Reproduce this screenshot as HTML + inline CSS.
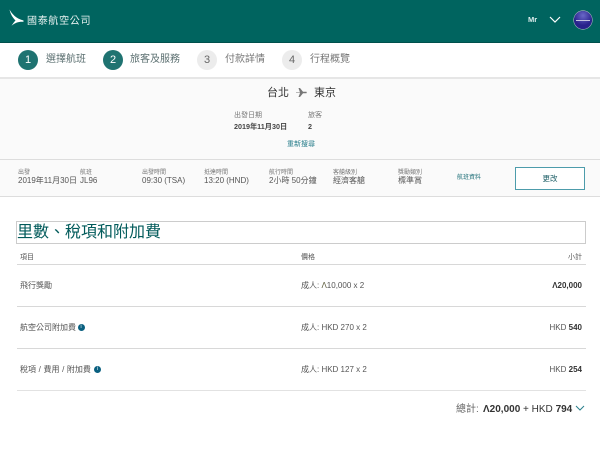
<!DOCTYPE html>
<html lang="zh-Hant"><head><meta charset="utf-8"><style>
html,body{margin:0;padding:0}
body{width:600px;height:452px;position:relative;overflow:hidden;background:#fff;font-family:"Liberation Sans","Noto Sans CJK TC",sans-serif;color:#4c4c4c}
.a{position:absolute;white-space:nowrap;line-height:1}
.b{position:absolute}
.c{position:absolute;width:20px;height:20px;border-radius:50%;line-height:20px;text-align:center;font-size:11px}
.on{background:#1f7371;color:#fff}
.off{background:#ececec;color:#666}
.s{font-size:10px;color:#5b6f70}
.l{font-size:6px;color:#777}
.v{font-size:8px;color:#555}
.t{font-size:8px;color:#555}
.hr{position:absolute;left:17px;width:569px;height:1px;background:#d8d8d8}
.i{position:absolute;width:7px;height:7px;border-radius:50%;background:#0a6080;color:#fff;font-size:5px;line-height:7px;text-align:center}
</style></head><body>
<div class="b" style="left:0;top:0;width:600px;height:42px;background:#00645f;border-bottom:1px solid #00504c"></div>
<svg class="b" style="left:0;top:0" width="30" height="30" viewBox="0 0 30 30"><path d="M9.5 9.5C12 14 16 18.500 23.500 20.500L23.500 21.800C19 21.500 15.500 22.500 11.500 25.800C13 23.500 14.500 21.500 15.500 20.500C12.500 17.500 10.500 14 9.500 9.500Z" fill="#fff"/></svg>
<div class="a" style="left:27px;top:17px;font-size:10px;letter-spacing:.7px;color:#e8f2f1">國泰航空公司</div>
<div class="a" style="left:528px;top:16px;font-size:7.5px;font-weight:bold;color:#dfeeee">Mr</div>
<svg class="b" style="left:549px;top:15px" width="12" height="9" viewBox="0 0 12 9"><path d="M1 2L6 7L11 2" fill="none" stroke="#fff" stroke-width="1.2"/></svg>
<div class="b" style="left:574px;top:11px;width:18px;height:18px;border-radius:50%;background:radial-gradient(circle at 50% 25%,#6a68c8,#28228c 60%);box-shadow:0 0 0 .6px #b5b5c8"></div>
<div class="b" style="left:576px;top:19.500px;width:14px;height:1px;background:#c4c4e0"></div>

<div class="c on" style="left:18px;top:50px">1</div><div class="a s" style="left:46px;top:55px">選擇航班</div>
<div class="c on" style="left:103px;top:50px">2</div><div class="a s" style="left:130px;top:55px">旅客及服務</div>
<div class="c off" style="left:197px;top:50px">3</div><div class="a s" style="left:225px;top:55px;color:#777">付款詳情</div>
<div class="c off" style="left:282px;top:50px">4</div><div class="a s" style="left:310px;top:55px;color:#777">行程概覽</div>

<div class="b" style="left:0;top:77px;width:600px;height:120px;background:#fafafa;border-top:2px solid #e6e6e6;box-sizing:border-box"></div>
<div class="a" style="left:267px;top:88px;font-size:11px;color:#333">台北</div>
<svg class="b" style="left:296px;top:87px" width="11" height="11" viewBox="0 0 11 11"><path d="M0 5.500H4L2.500 1H4L7 4.700H10.500Q11 5.500 10.500 6.300H7L4 10H2.500L4 6H0Z" fill="#777"/></svg>
<div class="a" style="left:314px;top:88px;font-size:11px;color:#333">東京</div>
<div class="a" style="left:234px;top:112px;font-size:7px;color:#777">出發日期</div>
<div class="a" style="left:308px;top:112px;font-size:7px;color:#777">旅客</div>
<div class="a" style="left:234px;top:123px;font-size:7.200px;font-weight:bold;color:#444">2019年11月30日</div>
<div class="a" style="left:308px;top:123px;font-size:7.200px;font-weight:bold;color:#444">2</div>
<div class="a" style="left:287px;top:141px;font-size:7px;color:#2a7f8c">重新搜尋</div>

<div class="b" style="left:0;top:159px;width:600px;height:1px;background:#ddd"></div>
<div class="b" style="left:0;top:196px;width:600px;height:1px;background:#ddd"></div>
<div class="a l" style="left:18px;top:170px">出發</div><div class="a v" style="left:18px;top:177px">2019年11月30日</div>
<div class="a l" style="left:80px;top:170px">航班</div><div class="a v" style="left:80px;top:177px">JL96</div>
<div class="a l" style="left:142px;top:170px">出發時間</div><div class="a v" style="left:142px;top:177px">09:30 (TSA)</div>
<div class="a l" style="left:204px;top:170px">抵達時間</div><div class="a v" style="left:204px;top:177px">13:20 (HND)</div>
<div class="a l" style="left:269px;top:170px">航行時間</div><div class="a v" style="left:269px;top:177px">2小時 50分鐘</div>
<div class="a l" style="left:333px;top:170px">客艙級別</div><div class="a v" style="left:333px;top:177px">經濟客艙</div>
<div class="a l" style="left:398px;top:170px">獎勵類別</div><div class="a v" style="left:398px;top:177px">標準賞</div>
<div class="a" style="left:457px;top:175px;font-size:6px;color:#1f6f78">航班資料</div>
<div class="b" style="left:515px;top:167px;width:68px;height:21px;border:1px solid #4d9cab;background:#fff;text-align:center;font-size:7.500px;line-height:21px;color:#1f6068">更改</div>

<div class="b" style="left:16px;top:221px;width:568px;height:21px;border:1px solid #ccc"></div>
<div class="a" style="left:17px;top:222px;font-size:16px;color:#005a5a">里數<span style="font-family:'Noto Sans CJK JP',sans-serif">、</span>稅項和附加費</div>

<div class="a" style="left:20px;top:254px;font-size:7px;color:#555">項目</div>
<div class="a" style="left:301px;top:254px;font-size:7px;color:#555">價格</div>
<div class="a" style="left:568px;top:254px;font-size:7px;color:#555">小計</div>
<div class="hr" style="top:264px"></div>
<div class="a t" style="left:20px;top:282px">飛行獎勵</div>
<div class="a t" style="left:301px;top:282px">成人: <span style="color:#5a5a3a">Λ</span>10,000 x 2</div>
<div class="a t" style="right:18px;top:282px;font-weight:bold;color:#333">Λ20,000</div>
<div class="hr" style="top:306px"></div>
<div class="a t" style="left:20px;top:324px">航空公司附加費</div><div class="i" style="left:77.500px;top:324px">i</div>
<div class="a t" style="left:301px;top:324px">成人: HKD 270 x 2</div>
<div class="a t" style="right:18px;top:324px">HKD <b style="color:#333">540</b></div>
<div class="hr" style="top:348px"></div>
<div class="a t" style="left:20px;top:366px;word-spacing:.4px">稅項 / 費用 / 附加費</div><div class="i" style="left:94px;top:366px">i</div>
<div class="a t" style="left:301px;top:366px">成人: HKD 127 x 2</div>
<div class="a t" style="right:18px;top:366px">HKD <b style="color:#333">254</b></div>
<div class="hr" style="top:390px;background:#e2e2e2"></div>
<div class="a" style="left:456px;top:405px;font-size:10px;color:#666">總計:</div>
<div class="a" style="left:483px;top:405px;font-size:10px;color:#333"><b>Λ20,000</b> + HKD <b>794</b></div>
<svg class="b" style="left:575px;top:405px" width="10" height="7" viewBox="0 0 10 7"><path d="M1 1L5 5L9 1" fill="none" stroke="#2a7f8c" stroke-width="1"/></svg>
</body></html>
